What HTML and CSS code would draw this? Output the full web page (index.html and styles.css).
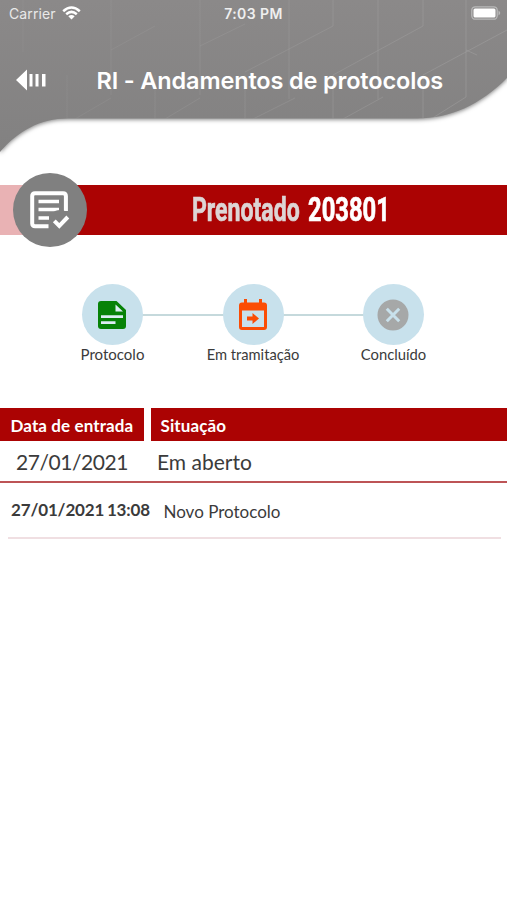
FILE: index.html
```html
<!DOCTYPE html>
<html lang="pt-BR">
<head>
<meta charset="utf-8">
<title>RI - Andamentos de protocolos</title>
<link rel="stylesheet" href="styles.css">
</head>
<body>
<header class="header">
  <svg class="header-bg" viewBox="0 0 507 165" aria-hidden="true">
    <defs>
      <linearGradient id="gray" x1="0" y1="0" x2="0" y2="1">
        <stop offset="0" stop-color="#8b8989"/><stop offset="1" stop-color="#828181"/>
      </linearGradient>
      <linearGradient id="fade" gradientUnits="userSpaceOnUse" x1="0" y1="0" x2="507" y2="0">
        <stop offset="0" stop-color="#a3a2a2" stop-opacity=".12"/><stop offset="1" stop-color="#a3a2a2" stop-opacity=".5"/>
      </linearGradient>
      <clipPath id="shape"><path d="M0 0H507V78C480 105 450 118.500 417 118.500H68C40 118.500 18 131 0 152Z"/></clipPath>
    </defs>
    <path class="header-shape" fill="url(#gray)" d="M0 0H507V78C480 105 450 118.500 417 118.500H68C40 118.500 18 131 0 152Z"/>
    <g class="header-lines" stroke="url(#fade)" clip-path="url(#shape)">
      <path d="M23 0V52M67 75V119M111 0V95M155 75V119M200 0V95M245 75V119M289 0V99M333 0V26M333 75V119M378 0V99M423 0V26M423 75V119M466 0V97"/>
      <path d="M75 119L111 98M111 50L155 26M165 119L200 98M200 46L245 24M253 119L295 98M245 72L333 26M343 119L383 97M333 75L423 26M431 119L466 97M423 75L507 30M466 50L477 55"/>
    </g>
  </svg>
  <div class="status">
    <div class="carrier">
      <span>Carrier</span>
      <svg class="wifi" viewBox="0 0 19 14" aria-hidden="true">
        <path d="M1.200 5.200Q9.500-2.200 17.800 5.200M4.200 8.200Q9.500 3.600 14.800 8.200"/>
        <path class="dot" d="M6.300 10.300Q9.500 7.800 12.700 10.300L9.500 13.600Z"/>
      </svg>
    </div>
    <time class="clock">7:03 PM</time>
    <svg class="battery" viewBox="0 0 30 14" aria-hidden="true">
      <rect class="case" x=".8" y=".8" width="25.400" height="12.400" rx="3.500"/>
      <rect class="charge" x="2.500" y="2.500" width="22" height="9" rx="1.500"/>
      <path class="tip" d="M27.500 4.500Q31 7 27.500 9.500Z"/>
    </svg>
  </div>
  <div class="nav">
    <svg class="back" viewBox="0 0 30 22" aria-hidden="true">
      <path d="M0 11L11 .5V21.500ZM13.500 5H16.500V17.500H13.500ZM19.500 5H22.500V17.500H19.500ZM26 5H29.500V17.500H26Z"/>
    </svg>
    <h1 class="title">RI - Andamentos de protocolos</h1>
  </div>
</header>
<main>
  <section class="banner">
    <div class="badge">
      <svg viewBox="0 0 40 40" aria-hidden="true">
        <path class="frame" d="M18.500 35.200H5Q2.200 35.200 2.200 32.500V5Q2.200 2.200 5 2.200H33Q35.900 2.200 35.900 5V20"/>
        <path class="rows" d="M8.500 10.500H29M8.500 18.500H29M8.500 27H19"/>
        <circle class="hole" cx="30" cy="30" r="11"/>
        <path class="tick" d="M24.300 29.800L29.300 34.800L37.800 26"/>
      </svg>
    </div>
    <div class="banner-text">
      <span class="label">Prenotado</span>
      <span class="number">203801</span>
    </div>
  </section>
  <section class="steps">
    <div class="step">
      <div class="disc">
        <svg class="icon-doc" viewBox="0 0 28 28" aria-hidden="true">
          <path class="green" d="M3 0H18.500L28 9V25Q28 28 25 28H3Q0 28 0 25V3Q0 0 3 0Z"/>
          <path class="cut" d="M17.500 3.500V10.500H25ZM3 14.300H25V17H3ZM3 20.300H17.500V23H3Z"/>
        </svg>
      </div>
      <span class="step-label protocol">Protocolo</span>
    </div>
    <div class="step">
      <div class="disc">
        <svg class="icon-cal" viewBox="0 0 28 32" aria-hidden="true">
          <path fill-rule="evenodd" d="M5 0H8V3.500H20V0H23V3.500H25Q28 3.500 28 6.500V28Q28 31 25 31H3Q0 31 0 28V6.500Q0 3.500 3 3.500H5ZM3 11.500V28H25V11.500Z"/>
          <path d="M8 17.500H13.500V14L20 19.500L13.500 25V21.500H8Z"/>
        </svg>
      </div>
      <span class="step-label progress">Em tramitação</span>
    </div>
    <div class="step">
      <div class="disc">
        <svg class="icon-close" viewBox="0 0 32 32" aria-hidden="true">
          <circle cx="16" cy="16" r="15.500"/><path d="M9.800 9.800L22.200 22.200M22.200 9.800L9.800 22.200"/>
        </svg>
      </div>
      <span class="step-label done">Concluído</span>
    </div>
  </section>
  <section class="table">
    <div class="cell head date-head"><span>Data de entrada</span></div>
    <div class="cell head state-head"><span>Situação</span></div>
    <div class="cell value date"><span>27/01/2021</span></div>
    <div class="cell value state"><span>Em aberto</span></div>
  </section>
  <section class="event">
    <strong class="when">27/01/2021 13:08</strong>
    <span class="what">Novo Protocolo</span>
  </section>
</main>
</body>
</html>
```
FILE: styles.css
```css
* { box-sizing: border-box; }
body {
  margin: 0;
  width: 507px;
  height: 900px;
  overflow: hidden;
  background: #fff;
  color: #3b3b3b;
  font-family: Lato, sans-serif;
  white-space: nowrap;
}
svg { display: block; overflow: visible; flex: none; }
.header { position: relative; height: 185px; color: #fff; font-family: Inter, sans-serif; }
.header-bg { position: absolute; inset: 0; width: 507px; height: 165px; }
.header-shape { filter: drop-shadow(0 1px 2px rgba(0, 0, 0, .5)); }
.header-lines { fill: none; stroke-width: 1; }
.status {
  position: relative;
  display: grid;
  grid-template-columns: 1fr auto 1fr;
  align-items: center;
  height: 26px;
  padding: 0 6px 0 9px;
}
.carrier { display: flex; align-items: center; gap: 6px; font-size: 14px; letter-spacing: .1px; color: #e9e9e9; }
.wifi { width: 19px; height: 14px; fill: none; stroke: #fff; stroke-width: 2.5; }
.wifi .dot { fill: #fff; stroke: none; }
.clock { margin-left: -3px; font-size: 14px; font-weight: 600; letter-spacing: .4px; color: #efefef; }
.battery { width: 30px; height: 14px; justify-self: end; }
.battery .case { fill: none; stroke: #b9b9b9; stroke-width: 1.3; }
.battery .charge { fill: #fff; }
.battery .tip { fill: #b9b9b9; }
.nav { position: relative; display: flex; align-items: center; height: 108px; padding-left: 16px; gap: 50.5px; }
.back { width: 30px; height: 22px; fill: #fff; }
.title { margin: 0; font-size: 23.5px; font-weight: 600; letter-spacing: -.15px; }
.banner {
  display: flex;
  align-items: center;
  height: 50px;
  padding-left: 13px;
  background: linear-gradient(90deg, #e9b2b4 50px, #ab0303 50px);
}
.badge { flex: none; display: grid; place-items: center; width: 74px; height: 74px; border-radius: 50%; background: #808080; }
.badge svg { width: 40px; height: 40px; margin-top: 2px; fill: none; stroke: #fff; stroke-width: 4; }
.badge .rows { stroke-width: 3.6; }
.badge .hole { fill: #808080; stroke: none; }
.banner-text { display: flex; width: 200px; margin-left: 104.5px; font: 700 33px/36px Roboto, sans-serif; -webkit-text-stroke: .7px; }
.banner-text span { flex: none; transform-origin: 0 50%; }
.label { width: 116px; color: #ddd5d5; transform: scaleX(.699); }
.number { width: 82px; color: #fff; transform: scaleX(.721); }
.steps {
  display: flex;
  justify-content: center;
  height: 173px;
  padding: 49px 1px 0 0;
  background: linear-gradient(#c5d9dc, #c5d9dc) 112px 79px / 280px 2px no-repeat;
}
.step { display: flex; flex-direction: column; align-items: center; width: 140.5px; }
.disc { display: grid; place-items: center; width: 61px; height: 61px; border-radius: 50%; background: #c8e1ec; }
.disc svg { margin-right: 1px; }
.step-label { margin-top: 1px; font-size: 14.5px; line-height: 17px; }
.protocol { font-size: 15px; }
.progress { font-size: 14.7px; }
.done { font-size: 14.8px; }
.icon-doc { width: 28px; height: 28px; }
.green { fill: #078207; }
.cut { fill: #dcedf3; }
.icon-cal { width: 28px; height: 32px; fill: #fb4d05; }
.icon-close { width: 32px; height: 32px; fill: #a6a8a8; stroke: #c8e1ec; }
.icon-close circle { stroke: none; }
.icon-close path { stroke-width: 3; }
.table {
  display: grid;
  grid-template-columns: 144px 1fr;
  grid-template-rows: 33px 40px;
  column-gap: 7px;
  height: 75px;
  border-bottom: 2px solid #bd5456;
}
.cell { display: flex; align-items: center; }
.head { padding: 2px 0 0 10.5px; background: #ab0303; color: #fff; font-size: 17px; font-weight: 700; letter-spacing: .1px; }
.state-head { padding-left: 9.5px; }
.value { padding: 1px 0 0 16px; font-size: 21px; }
.value.date { letter-spacing: -.45px; }
.value.state { padding-left: 6px; }
.event { display: flex; height: 56px; margin: 0 6px 0 8px; padding: 17px 0 0 3px; border-bottom: 2px solid #f0dfe2; font-size: 17px; line-height: 20px; }
.when { width: 152.5px; letter-spacing: -.15px; word-spacing: -1.3px; }
.what { padding-top: 2px; }
```
